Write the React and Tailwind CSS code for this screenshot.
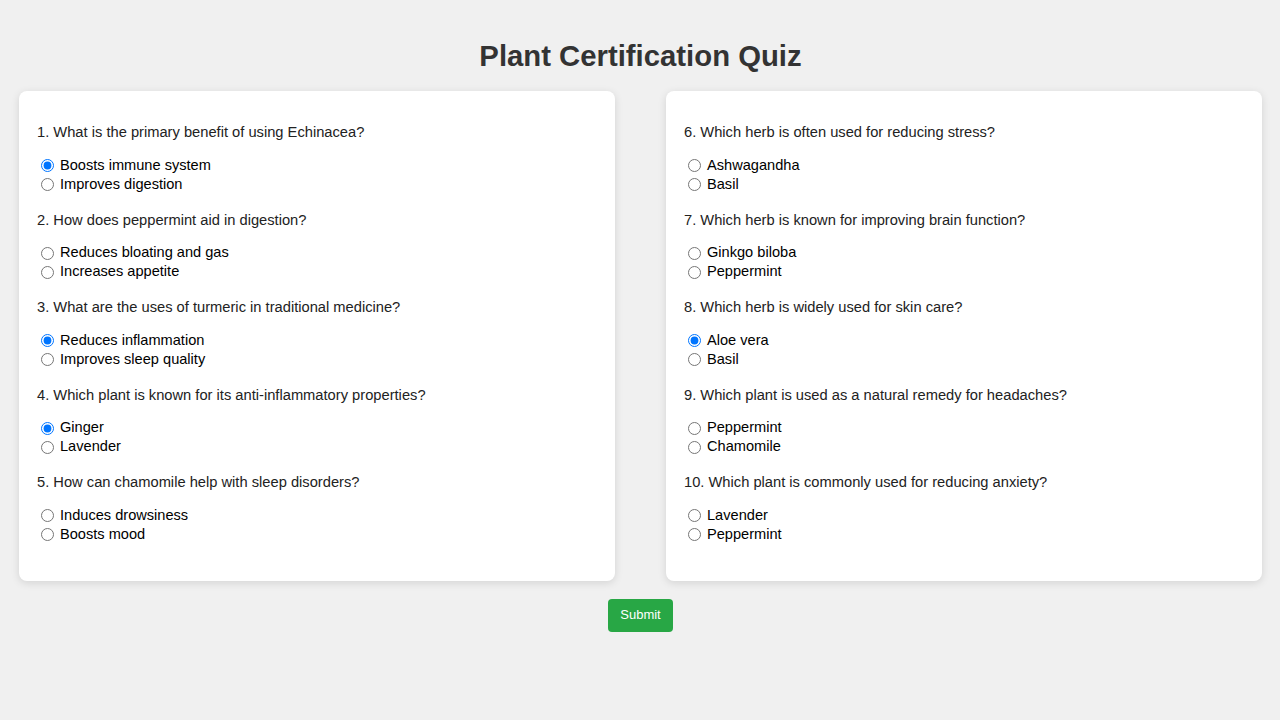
import React from 'react';

const left = [
  { q: '1. What is the primary benefit of using Echinacea?', opts: ['Boosts immune system', 'Improves digestion'], checked: 0 },
  { q: '2. How does peppermint aid in digestion?', opts: ['Reduces bloating and gas', 'Increases appetite'], checked: null },
  { q: '3. What are the uses of turmeric in traditional medicine?', opts: ['Reduces inflammation', 'Improves sleep quality'], checked: 0 },
  { q: '4. Which plant is known for its anti-inflammatory properties?', opts: ['Ginger', 'Lavender'], checked: 0 },
  { q: '5. How can chamomile help with sleep disorders?', opts: ['Induces drowsiness', 'Boosts mood'], checked: null },
];

const right = [
  { q: '6. Which herb is often used for reducing stress?', opts: ['Ashwagandha', 'Basil'], checked: null },
  { q: '7. Which herb is known for improving brain function?', opts: ['Ginkgo biloba', 'Peppermint'], checked: null },
  { q: '8. Which herb is widely used for skin care?', opts: ['Aloe vera', 'Basil'], checked: 0 },
  { q: '9. Which plant is used as a natural remedy for headaches?', opts: ['Peppermint', 'Chamomile'], checked: null },
  { q: '10. Which plant is commonly used for reducing anxiety?', opts: ['Lavender', 'Peppermint'], checked: null },
];

function Question({ item, name }) {
  return (
    <div className="pt-[14px] pb-[3.5px]">
      <p className="text-[14.7px] leading-[17px] text-[#222]">{item.q}</p>
      <div className="mt-[15px]">
        {item.opts.map((opt, i) => (
          <label key={opt} className="flex h-[19px] items-center text-[14.6px] text-black">
            <input
              type="radio"
              name={name}
              defaultChecked={item.checked === i}
              className="m-0 ml-[4px] mr-[6px] h-[13px] w-[13px]"
            />
            {opt}
          </label>
        ))}
      </div>
    </div>
  );
}

function Panel({ items, prefix }) {
  return (
    <div className="w-[596px] rounded-lg bg-white px-[18px] pt-[19px] pb-[33px] shadow-[0_2px_8px_rgba(0,0,0,0.12)]">
      {items.map((item, i) => (
        <Question key={item.q} item={item} name={`${prefix}${i}`} />
      ))}
    </div>
  );
}

export default function App() {
  return (
    <div className="min-h-[720px] bg-[#f0f0f0] pl-[19px] pr-[18px] pt-[38px] font-['Liberation_Sans',Arial,sans-serif]">
      <h1 className="text-center text-[29.3px] font-bold leading-[36px] text-[#333]">Plant Certification Quiz</h1>
      <div className="mt-[17px] flex justify-between">
        <Panel items={left} prefix="l" />
        <Panel items={right} prefix="r" />
      </div>
      <div className="mt-[18px] flex justify-center">
        <button className="h-[33px] w-[65px] rounded bg-[#28a745] text-[13px] text-white">Submit</button>
      </div>
    </div>
  );
}
